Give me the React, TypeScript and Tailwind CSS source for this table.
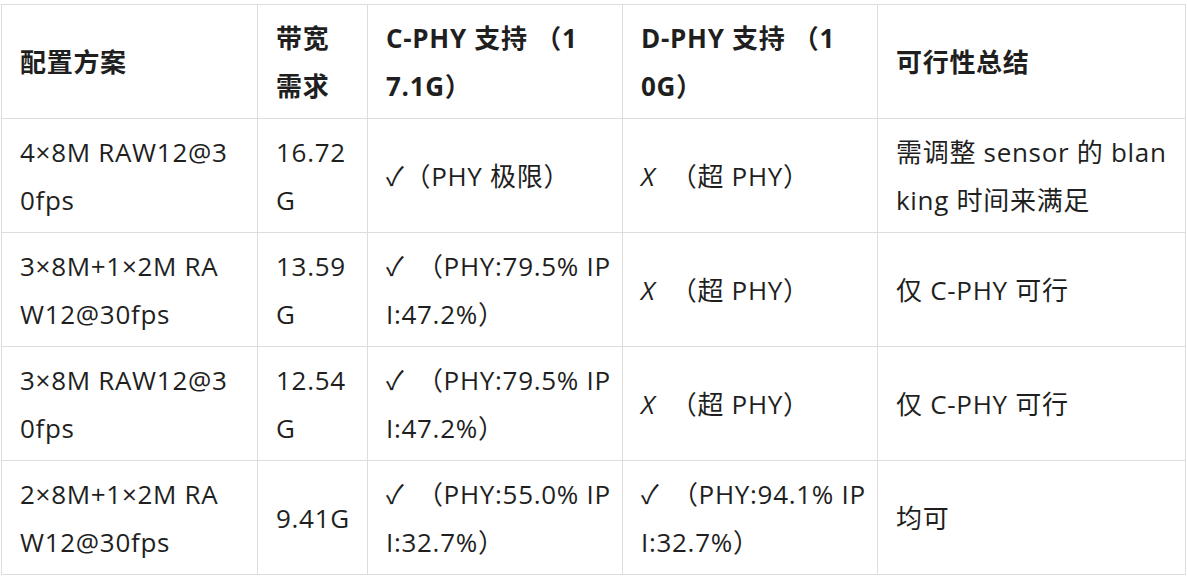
import React from 'react'

type Row = React.ReactNode[]

const Cross = () => <span className="italic mr-[8px]">X</span>
const Check = () => <span className="mr-[5px]">✓</span>

const header: Row = [
  '配置方案',
  <>带宽<br />需求</>,
  <>C-PHY 支持 （1<br />7.1G）</>,
  <>D-PHY 支持 （1<br />0G）</>,
  '可行性总结',
]

const rows: Row[] = [
  [
    <>4×8M RAW12@3<br />0fps</>,
    <>16.72<br />G</>,
    '✓（PHY 极限）',
    <><Cross /> （超 PHY）</>,
    <>需调整 sensor 的 blan<br />king 时间来满足</>,
  ],
  [
    <>3×8M+1×2M RA<br />W12@30fps</>,
    <>13.59<br />G</>,
    <><Check /> （PHY:79.5% IP<br />I:47.2%）</>,
    <><Cross /> （超 PHY）</>,
    '仅 C-PHY 可行',
  ],
  [
    <>3×8M RAW12@3<br />0fps</>,
    <>12.54<br />G</>,
    <><Check /> （PHY:79.5% IP<br />I:47.2%）</>,
    <><Cross /> （超 PHY）</>,
    '仅 C-PHY 可行',
  ],
  [
    <>2×8M+1×2M RA<br />W12@30fps</>,
    '9.41G',
    <><Check /> （PHY:55.0% IP<br />I:32.7%）</>,
    <><Check /> （PHY:94.1% IP<br />I:32.7%）</>,
    '均可',
  ],
]

const widths = ['w-[256px]', 'w-[110px]', 'w-[255px]', 'w-[255px]', 'w-[308px]']

export default function App() {
  return (
    <div className="bg-white min-h-[579px] pt-[4px] pl-[1px] font-['Open_Sans','Noto_Sans_CJK_SC',sans-serif] text-[#1f1f1f]">
      <table className="table-fixed border-collapse w-[1185px] text-[26px] leading-[48px] tracking-[0.7px]">
        <colgroup>
          {widths.map((w, i) => (
            <col key={i} className={w} />
          ))}
        </colgroup>
        <thead>
          <tr>
            {header.map((h, i) => (
              <th
                key={i}
                className="border border-[#dddddd] px-[18px] pt-[9px] pb-[8px] text-left align-middle font-bold whitespace-nowrap"
              >
                {h}
              </th>
            ))}
          </tr>
        </thead>
        <tbody>
          {rows.map((row, r) => (
            <tr key={r}>
              {row.map((cell, i) => (
                <td
                  key={i}
                  className="border border-[#dddddd] px-[18px] pt-[9px] pb-[8px] h-[114px] align-middle whitespace-nowrap"
                >
                  {cell}
                </td>
              ))}
            </tr>
          ))}
        </tbody>
      </table>
    </div>
  )
}
